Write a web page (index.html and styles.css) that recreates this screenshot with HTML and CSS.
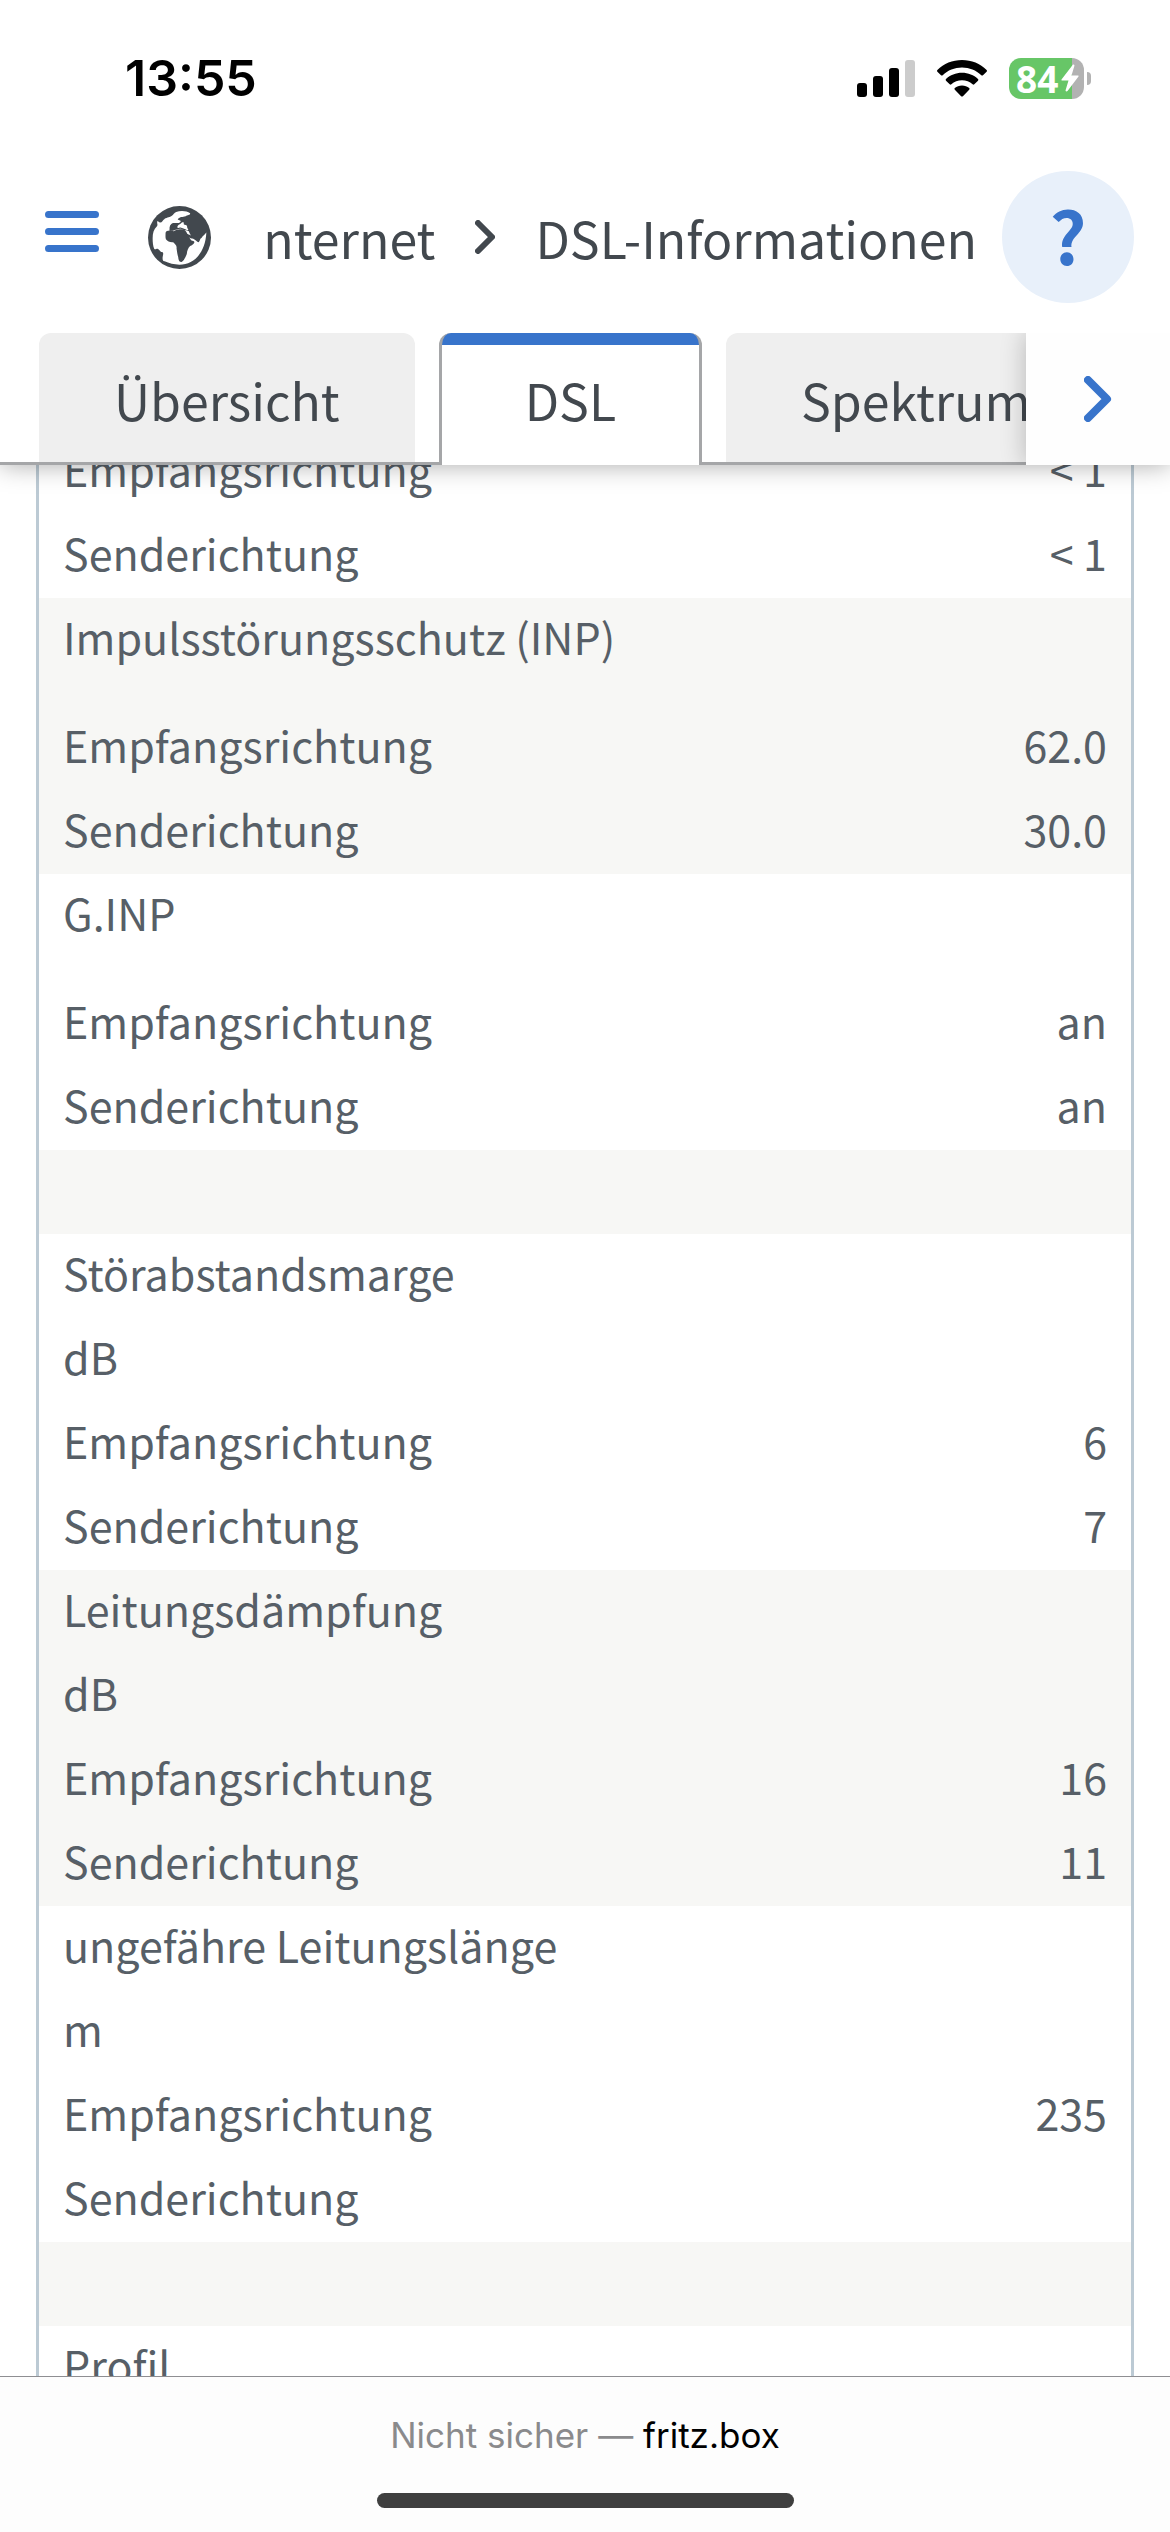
FILE: index.html
```html
<!DOCTYPE html>
<html lang="de">
<head>
<meta charset="utf-8">
<meta name="viewport" content="width=device-width, initial-scale=1">
<title>DSL-Informationen – fritz.box</title>
<link rel="stylesheet" href="styles.css">
</head>
<body>
<div class="statusbar">
  <time class="clock">13:55</time>
  <div class="indicators">
    <svg class="signal" viewBox="0 0 58 37" aria-hidden="true">
      <rect x="0" y="23" width="10" height="14" rx="3"/>
      <rect x="16" y="16" width="10" height="21" rx="3"/>
      <rect x="32" y="8" width="10" height="29" rx="3"/>
      <rect class="signal-off" x="48" y="0" width="10" height="37" rx="3"/>
    </svg>
    <svg class="wifi" viewBox="0 0 50 37" aria-hidden="true">
      <path d="M25 0C34.500 0 43.300 3.600 49.600 9.900Q50.400 10.800 49.600 11.700L46 15.200Q45.200 16 44.300 15.200C39.200 10.400 32.400 7.600 25 7.600S10.800 10.400 5.700 15.200Q4.800 16 4 15.200L.4 11.700Q-.4 10.800.4 9.900C6.700 3.600 15.500 0 25 0Z"/>
      <path d="M25 12.800C31.200 12.800 36.800 15.100 41 19Q41.800 19.900 41 20.700L37.300 24.300Q36.500 25 35.600 24.300C32.800 21.800 29.100 20.300 25 20.300S17.200 21.800 14.400 24.300Q13.500 25 12.700 24.300L9 20.700Q8.200 19.900 9 19C13.200 15.100 18.800 12.800 25 12.800Z"/>
      <path d="M25 25.600C27.800 25.600 30.300 26.500 32.200 28.100Q33 28.900 32.200 29.700L25.900 36.200Q25 37 24.100 36.200L17.800 29.700Q17 28.900 17.800 28.100C19.700 26.500 22.200 25.600 25 25.600Z"/>
    </svg>
    <div class="battery">
      <span class="battery-body"><span class="battery-level">84</span>
        <svg class="bolt" viewBox="0 0 18 28" aria-hidden="true"><path d="M12 0.500L0.500 15.500Q0 16.500 1 16.500H7.500L4.500 26.500Q5 28 6.500 27L17.500 12.500Q18 11.500 17 11.500H10.500L13.500 1.500Q13 0 12 0.500Z"/></svg>
      </span>
      <span class="battery-cap"></span>
    </div>
  </div>
</div>
<header class="header">
  <div class="titlebar">
    <button class="menu" aria-label="Menü">
      <svg viewBox="0 0 54 54" aria-hidden="true"><path d="M3.500 4.500H50.500M3.500 21.500H50.500M3.500 38.500H50.500"/></svg>
    </button>
    <svg class="globe" viewBox="55 41 190 190" aria-hidden="true">
      <circle class="land" cx="150" cy="136" r="95"/>
      <path class="sea" d="M182 63C172 55 152 55 140 59C134 61 132 67 126 71C119 76 108 76 105 80C99 84 98 90 92 91C86 90 86 85 84 86C80 92 86 97 82 102C72 111 69 124 69 138C69 151 70 161 74 171C79 173 80 169 84 170C91 173 91 180 98 180C104 184 99 190 99 196C99 202 99 207 105 208C118 214 134 218 150 218C192 218 228 184 231 121C229 123 226 127 222 131C219 131 220 137 213 140C210 148 208 153 204 149C197 143 191 138 187 139C180 138 173 133 170 127C169 124 178 126 183 130C185 129 180 123 178 117C173 113 164 115 158 111C148 108 145 112 139 113C133 114 130 117 125 116C122 117 118 116 120 113C119 104 124 96 133 93C138 91 145 94 151 91C157 86 152 84 147 83C141 81 148 77 155 74C160 75 166 74 172 70C177 67 183 68 182 63Z"/>
      <path class="land" d="M121 108C119 98 127 92 134 92C142 93 149 91 151 95C147 98 144 100 143 105C136 103 134 98 129 103C127 107 124 106 121 108Z"/>
      <path class="sea" d="M143 105C145 98 150 97 154 94C157 89 164 88 163 93C161 99 168 97 171 99C175 103 171 106 176 111C178 115 173 114 168 111C162 109 157 108 153 106C149 104 147 110 143 105Z"/>
      <path class="land" d="M108 122C109 115 121 113 132 117C139 112 148 110 155 111C164 110 171 116 173 124C178 129 179 137 185 144C190 147 195 146 195 150C194 156 187 159 182 162C176 168 173 176 172 186C168 195 163 208 156 210C148 211 147 202 146 195C143 185 142 175 141 168C143 160 135 155 131 150C122 151 114 148 109 141C107 135 108 129 108 122Z"/>
    </svg>
    <nav class="breadcrumb" aria-label="Pfad">
      <a href="#internet">Internet</a>
      <svg class="separator" viewBox="0 0 20 34" aria-hidden="true"><path d="M3 3L17 17L3 31"/></svg>
      <a href="#dsl">DSL-Informationen</a>
    </nav>
    <button class="help" aria-label="Hilfe">?</button>
  </div>
  <div class="tabbar">
    <nav class="tabs" aria-label="Reiter">
      <a class="tab" href="#uebersicht">Übersicht</a>
      <a class="tab tab-active" href="#dsl" aria-current="page">DSL</a>
      <a class="tab" href="#spektrum">Spektrum</a>
    </nav>
    <button class="tabs-next" aria-label="Weitere Reiter">
      <svg viewBox="0 0 28 46" aria-hidden="true"><path d="M4 4L23 23L4 42"/></svg>
    </button>
  </div>
</header>
<main class="content">
  <table class="values">
    <tbody>
      <tr><th scope="row">Empfangsrichtung</th><td>&lt; 1</td></tr>
      <tr><th scope="row">Senderichtung</th><td>&lt; 1</td></tr>
    </tbody>
    <tbody>
      <tr class="no-unit"><th scope="rowgroup" colspan="2">Impulsstörungsschutz (INP)</th></tr>
      <tr><th scope="row">Empfangsrichtung</th><td>62.0</td></tr>
      <tr><th scope="row">Senderichtung</th><td>30.0</td></tr>
    </tbody>
    <tbody>
      <tr class="no-unit"><th scope="rowgroup" colspan="2">G.INP</th></tr>
      <tr><th scope="row">Empfangsrichtung</th><td>an</td></tr>
      <tr><th scope="row">Senderichtung</th><td>an</td></tr>
    </tbody>
    <tbody>
      <tr><td colspan="2">&nbsp;</td></tr>
    </tbody>
    <tbody>
      <tr><th scope="rowgroup" colspan="2">Störabstandsmarge</th></tr>
      <tr><th colspan="2">dB</th></tr>
      <tr><th scope="row">Empfangsrichtung</th><td>6</td></tr>
      <tr><th scope="row">Senderichtung</th><td>7</td></tr>
    </tbody>
    <tbody>
      <tr><th scope="rowgroup" colspan="2">Leitungsdämpfung</th></tr>
      <tr><th colspan="2">dB</th></tr>
      <tr><th scope="row">Empfangsrichtung</th><td>16</td></tr>
      <tr><th scope="row">Senderichtung</th><td>11</td></tr>
    </tbody>
    <tbody>
      <tr><th scope="rowgroup" colspan="2">ungefähre Leitungslänge</th></tr>
      <tr><th colspan="2">m</th></tr>
      <tr><th scope="row">Empfangsrichtung</th><td>235</td></tr>
      <tr><th scope="row">Senderichtung</th><td></td></tr>
    </tbody>
    <tbody>
      <tr><td colspan="2">&nbsp;</td></tr>
    </tbody>
    <tbody>
      <tr><th scope="rowgroup" colspan="2">Profil</th></tr>
    </tbody>
  </table>
</main>
<footer class="addressbar">
  <p class="address"><span class="insecure">Nicht sicher —</span> fritz.box</p>
  <div class="home-indicator"></div>
</footer>
</body>
</html>
```
FILE: styles.css
```css
:root {
  --blue: #3874cb;
  --ink: #42484e;
  --text: #575f67;
  --line: #a5a6a8;
  --frame: #bccad4;
}

* {
  box-sizing: border-box;
}

body {
  margin: 0;
  height: 100vh;
  display: flex;
  flex-direction: column;
  overflow: hidden;
  background: #fff;
  color: var(--text);
  font-family: "Noto Sans CJK SC", "Noto Sans", sans-serif;
  font-size: 43px;
}

button {
  border: 0;
  padding: 0;
  background: none;
  font: inherit;
  cursor: pointer;
}

svg {
  display: block;
}

a {
  color: inherit;
  text-decoration: none;
}

/* Status bar */
.statusbar {
  position: relative;
  z-index: 3;
  flex: none;
  display: flex;
  justify-content: space-between;
  align-items: center;
  height: 156px;
  padding: 0 79px 0 125px;
  background: #fff;
  color: #000;
  font-family: Inter, sans-serif;
}

.clock {
  font-size: 50px;
  font-weight: 600;
}

.indicators {
  display: flex;
  align-items: center;
  gap: 22px;
}

.signal {
  width: 58px;
  height: 37px;
}

.signal-off {
  fill: #ccc;
}

.wifi {
  width: 50px;
  height: 37px;
}

.battery {
  display: flex;
  align-items: center;
  gap: 3px;
}

.battery-body {
  display: flex;
  align-items: center;
  width: 75px;
  height: 41px;
  padding-left: 7px;
  border-radius: 12px;
  background: linear-gradient(90deg, #67c667 84%, #b2b2b2 84%);
}

.battery-level {
  color: #fff;
  font-family: "Open Sans", sans-serif;
  font-size: 37px;
  font-weight: 700;
  line-height: 41px;
}

.bolt {
  width: 18px;
  height: 28px;
  margin-left: 3px;
  fill: #fff;
}

.battery-cap {
  width: 4px;
  height: 13px;
  border-radius: 0 4px 4px 0;
  background: #b2b2b2;
}

/* Header */
.header {
  position: relative;
  z-index: 2;
  flex: none;
  background: #fff;
  color: var(--ink);
  font-size: 50px;
  box-shadow: 0 0 24px rgba(0, 0, 0, 0.34);
}

.titlebar {
  display: flex;
  align-items: center;
  height: 132px;
  margin: 15px 0 30px;
  padding: 0 36px 0 45px;
}

.menu {
  flex: none;
  margin-right: 49px;
}

.menu svg {
  width: 54px;
  height: 54px;
  fill: none;
  stroke: var(--blue);
  stroke-width: 7;
  stroke-linecap: round;
}

.globe {
  flex: none;
  width: 63px;
  height: 63px;
  margin-right: 53px;
}

.land {
  fill: var(--ink);
}

.sea {
  fill: #fff;
}

.breadcrumb {
  flex: 1;
  min-width: 0;
  display: flex;
  justify-content: flex-end;
  align-items: center;
  gap: 40px;
  overflow: hidden;
  margin-right: 25px;
  line-height: 72px;
  white-space: nowrap;
}

.separator {
  flex: none;
  width: 20px;
  height: 34px;
  fill: none;
  stroke: var(--ink);
  stroke-width: 6;
  stroke-linecap: round;
  stroke-linejoin: round;
}

.help {
  flex: none;
  width: 132px;
  height: 132px;
  padding-bottom: 6px;
  border-radius: 50%;
  background: #e8f0fa;
  color: var(--blue);
  font-size: 72px;
  font-weight: 700;
  line-height: 72px;
}

/* Tabs */
.tabbar {
  display: flex;
  height: 132px;
}

.tabs {
  flex: 1;
  min-width: 0;
  display: flex;
  gap: 24px;
  overflow: hidden;
  padding-left: 39px;
  background: linear-gradient(var(--line), var(--line)) bottom / 100% 3px no-repeat;
}

.tab {
  flex: none;
  padding: 0 75px;
  border-bottom: 3px solid var(--line);
  border-radius: 12px 12px 0 0;
  background: #efefef;
  line-height: 132px;
}

.tab-active {
  padding: 0 83px;
  border: solid var(--line);
  border-width: 0 3px;
  background: linear-gradient(var(--blue), var(--blue)) top / 100% 12px no-repeat border-box, #fff;
}

.tabs-next {
  flex: none;
  display: grid;
  place-items: center;
  width: 144px;
  background: #fefefe;
  box-shadow: 0 0 24px rgba(0, 0, 0, 0.24);
  clip-path: inset(0 0 0 -30px);
}

.tabs-next svg {
  width: 28px;
  height: 46px;
  fill: none;
  stroke: var(--blue);
  stroke-width: 8;
  stroke-linecap: round;
  stroke-linejoin: round;
}

/* Values */
.content {
  flex: 1;
  min-height: 0;
  overflow: hidden;
  padding: 0 36px;
}

/* The list is scrolled part of a row under the header. */
.values {
  width: 100%;
  margin-top: -35px;
  border-spacing: 0;
  border: solid var(--frame);
  border-width: 0 3px;
}

.values tbody:nth-child(even) {
  background: #f7f7f5;
}

.values th,
.values td {
  padding: 0 24px 8px;
  line-height: 76px;
  font-weight: 400;
  text-align: left;
}

.values td {
  text-align: right;
}

.values .no-unit th {
  padding-bottom: 32px;
}

/* Browser address bar */
.addressbar {
  flex: none;
  display: flex;
  flex-direction: column;
  align-items: center;
  justify-content: space-between;
  height: 156px;
  padding: 30px 0 24px;
  border-top: 1px solid #8e8e92;
  background: #fdfdfd;
  color: #000;
}

.address {
  margin: 0;
  font-family: Inter, sans-serif;
  font-size: 35px;
  line-height: 56px;
}

.insecure {
  color: #8a8a8c;
}

.home-indicator {
  width: 417px;
  height: 15px;
  border-radius: 8px;
  background: #3f3f3f;
}
```
